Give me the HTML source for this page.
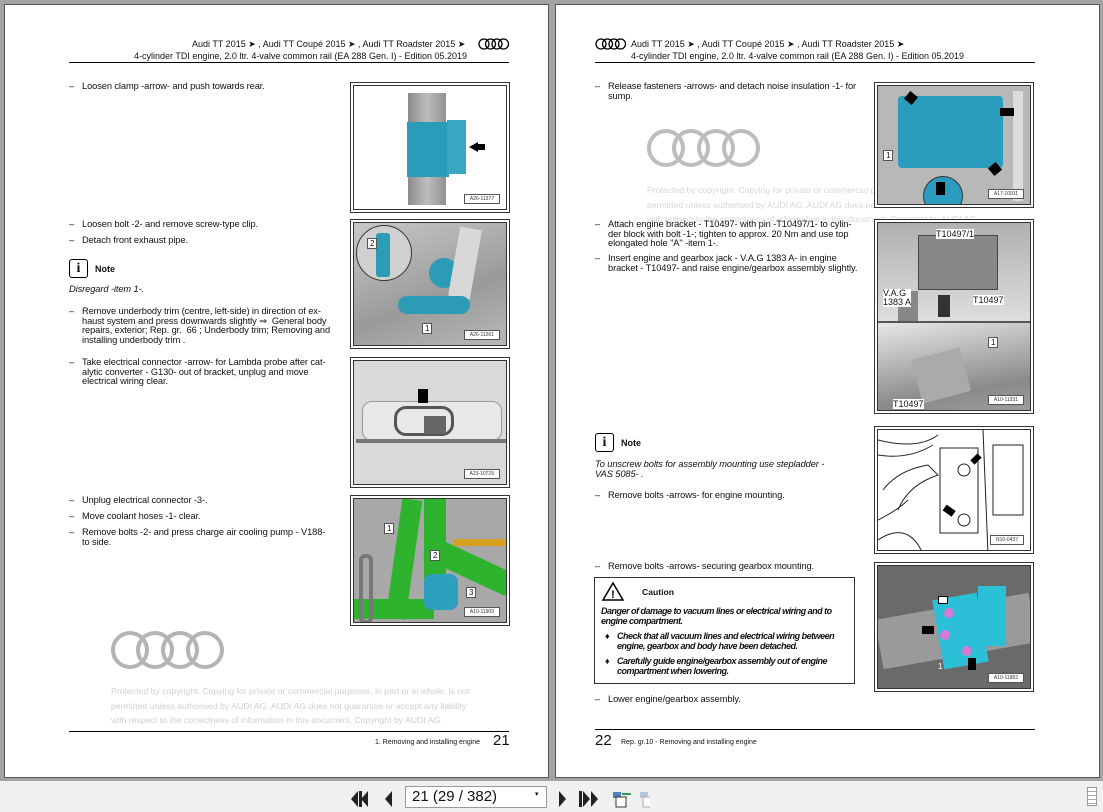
<!DOCTYPE html>
<html><head><meta charset="utf-8"><style>
*{margin:0;padding:0;box-sizing:border-box}
body{width:1103px;height:812px;background:#a3a3a3;position:relative;overflow:hidden;font-family:"Liberation Sans",Arial,sans-serif;color:#111}
.page{position:absolute;top:4px;height:774px;background:#fff;border:1px solid #555}
.a{position:absolute;white-space:nowrap}
.t{position:absolute;font-size:9.3px;line-height:9.6px;letter-spacing:-0.1px;white-space:nowrap}
.t .d{position:absolute;left:-13px}
.hl{position:absolute;height:1px;background:#000}
.fig{position:absolute;border:1px solid #333;padding:2px;background:#fff}
.fig>div{width:100%;height:100%;border:1px solid #333;position:relative;overflow:hidden}
.lab{position:absolute;right:6px;bottom:5px;font-size:5px;border:1px solid #555;background:#fff;padding:1px 5px;color:#333}
.wm{position:absolute;font-size:8.7px;color:#cfcfcf;line-height:14.5px;white-space:nowrap}
.rings{position:absolute}
.num{position:absolute;background:#fff;border:1px solid #555;font-size:8px;padding:0 2px}
.tb{position:absolute;left:0;top:781px;width:1103px;height:31px;background:#f0f0f0}
</style></head><body>

<!-- LEFT PAGE -->
<div class="page" style="left:4px;width:545px"></div>
<div class="a" style="left:192px;top:39px;font-size:9px">Audi TT 2015 ➤ , Audi TT Coupé 2015 ➤ , Audi TT Roadster 2015 ➤</div>
<svg class="rings" style="left:478px;top:38px" width="32" height="12"><g fill="none" stroke="#000" stroke-width="1.3"><circle cx="6" cy="6" r="5"/><circle cx="12.5" cy="6" r="5"/><circle cx="19" cy="6" r="5"/><circle cx="25.5" cy="6" r="5"/></g></svg>
<div class="a" style="left:134px;top:51px;font-size:9px">4-cylinder TDI engine, 2.0 ltr. 4-valve common rail (EA 288 Gen. I) - Edition 05.2019</div>
<div class="hl" style="left:69px;top:62px;width:440px"></div>

<div class="t" style="left:82px;top:82px"><span class="d">–</span>Loosen clamp -arrow- and push towards rear.</div>
<div class="t" style="left:82px;top:220px"><span class="d">–</span>Loosen bolt -2- and remove screw-type clip.</div>
<div class="t" style="left:82px;top:236px"><span class="d">–</span>Detach front exhaust pipe.</div>
<div class="a" style="left:69px;top:259px;width:19px;height:19px;border:1.3px solid #000;border-radius:3px;font:bold 14px 'Liberation Serif',serif;text-align:center;line-height:17px">i</div>
<div class="a" style="left:95px;top:264px;font-size:9px;font-weight:bold">Note</div>
<div class="t" style="left:69px;top:285px;font-style:italic">Disregard -item 1-.</div>
<div class="t" style="left:82px;top:307px"><span class="d">–</span>Remove underbody trim (centre, left-side) in direction of ex-<br>haust system and press downwards slightly ⇒&nbsp; General body<br>repairs, exterior; Rep. gr.&nbsp; 66 ; Underbody trim; Removing and<br>installing underbody trim .</div>
<div class="t" style="left:82px;top:358px"><span class="d">–</span>Take electrical connector -arrow- for Lambda probe after cat-<br>alytic converter - G130- out of bracket, unplug and move<br>electrical wiring clear.</div>
<div class="t" style="left:82px;top:496px"><span class="d">–</span>Unplug electrical connector -3-.</div>
<div class="t" style="left:82px;top:512px"><span class="d">–</span>Move coolant hoses -1- clear.</div>
<div class="t" style="left:82px;top:528px"><span class="d">–</span>Remove bolts -2- and press charge air cooling pump - V188-<br>to side.</div>

<!-- figs left -->
<div class="fig" style="left:350px;top:82px;width:160px;height:131px"><div style="background:#fff">
 <div class="a" style="left:54px;top:7px;width:38px;height:112px;background:linear-gradient(90deg,#8a8a8a,#bdbdbd 50%,#909090)"></div>
 <div class="a" style="left:53px;top:36px;width:42px;height:55px;background:#2a9bb8"></div>
 <div class="a" style="left:93px;top:34px;width:19px;height:54px;background:#39a7c2"></div>
 <div class="a" style="left:115px;top:56px;width:0;height:0;border-top:5px solid transparent;border-bottom:5px solid transparent;border-right:9px solid #000"></div>
 <div class="a" style="left:123px;top:58px;width:8px;height:6px;background:#000"></div>
 <div class="lab">A26-11377</div></div></div>
<div class="fig" style="left:350px;top:219px;width:160px;height:130px"><div style="background:linear-gradient(160deg,#c8c8c8,#9a9a9a 60%,#b8b8b8)">
 <div class="a" style="left:2px;top:2px;width:56px;height:56px;border-radius:50%;background:#d0d0d0;border:1px solid #333"></div>
 <div class="a" style="left:22px;top:10px;width:14px;height:44px;background:#2c9cb6;border-radius:3px"></div>
 <div class="a" style="left:75px;top:35px;width:30px;height:30px;border-radius:50%;background:#2c9cb6"></div>
 <div class="a" style="left:100px;top:5px;width:22px;height:70px;background:#d8d8d8;transform:rotate(10deg)"></div>
 <div class="a" style="left:44px;top:73px;width:72px;height:18px;background:#2c9cb6;border-radius:9px"></div>
 <div class="num" style="left:13px;top:15px">2</div><div class="num" style="left:68px;top:100px">1</div>
 <div class="lab">A26-11261</div></div></div>
<div class="fig" style="left:350px;top:357px;width:160px;height:131px"><div style="background:#d9d9d9">
 <div class="a" style="left:8px;top:40px;width:140px;height:40px;background:#e8e8e8;border:1px solid #999;border-radius:10px"></div>
 <div class="a" style="left:40px;top:45px;width:60px;height:30px;border:3px solid #555;border-radius:12px"></div>
 <div class="a" style="left:70px;top:55px;width:22px;height:18px;background:#666"></div>
 <div class="a" style="left:2px;top:78px;width:150px;height:4px;background:#777"></div>
 <div class="a" style="left:64px;top:28px;width:10px;height:14px;background:#000"></div>
 <div class="lab">A23-10729</div></div></div>
<div class="fig" style="left:350px;top:495px;width:160px;height:131px"><div style="background:#a8a8a8">
 <div class="a" style="left:40px;top:0;width:20px;height:120px;background:#2db32d;transform:rotate(8deg)"></div>
 <div class="a" style="left:70px;top:0;width:22px;height:80px;background:#2db32d"></div>
 <div class="a" style="left:70px;top:55px;width:90px;height:24px;background:#2db32d;transform:rotate(25deg)"></div>
 <div class="a" style="left:0;top:100px;width:80px;height:20px;background:#2db32d"></div>
 <div class="a" style="left:70px;top:75px;width:34px;height:36px;background:#2f9fc0;border-radius:8px"></div>
 <div class="a" style="left:100px;top:40px;width:55px;height:7px;background:#d8a020"></div>
 <div class="a" style="left:5px;top:55px;width:14px;height:70px;border:4px solid #777;border-radius:6px"></div>
 <div class="num" style="left:30px;top:24px">1</div><div class="num" style="left:76px;top:51px">2</div><div class="num" style="left:112px;top:88px">3</div>
 <div class="lab">A10-11909</div></div></div>

<svg class="rings" style="left:110px;top:630px" width="115" height="40"><g fill="none" stroke="#b4b4b4" stroke-width="4"><circle cx="20" cy="20" r="17"/><circle cx="45" cy="20" r="17"/><circle cx="70" cy="20" r="17"/><circle cx="95" cy="20" r="17"/></g></svg>
<div class="wm" style="left:111px;top:684px">Protected by copyright. Copying for private or commercial purposes, in part or in whole, is not<br>permitted unless authorised by AUDI AG. AUDI AG does not guarantee or accept any liability<br>with respect to the correctness of information in this document. Copyright by AUDI AG.</div>
<div class="hl" style="left:69px;top:731px;width:440px"></div>
<div class="a" style="left:375px;top:739px;font-size:7px">1. Removing and installing engine</div>
<div class="a" style="left:493px;top:732px;font-size:15px">21</div>

<!-- RIGHT PAGE -->
<div class="page" style="left:555px;width:545px"></div>
<svg class="rings" style="left:595px;top:38px" width="32" height="12"><g fill="none" stroke="#000" stroke-width="1.3"><circle cx="6" cy="6" r="5"/><circle cx="12.5" cy="6" r="5"/><circle cx="19" cy="6" r="5"/><circle cx="25.5" cy="6" r="5"/></g></svg>
<div class="a" style="left:631px;top:39px;font-size:9px">Audi TT 2015 ➤ , Audi TT Coupé 2015 ➤ , Audi TT Roadster 2015 ➤</div>
<div class="a" style="left:631px;top:51px;font-size:9px">4-cylinder TDI engine, 2.0 ltr. 4-valve common rail (EA 288 Gen. I) - Edition 05.2019</div>
<div class="hl" style="left:595px;top:62px;width:440px"></div>

<svg class="rings" style="left:646px;top:128px" width="115" height="40"><g fill="none" stroke="#bdbdbd" stroke-width="4"><circle cx="20" cy="20" r="17"/><circle cx="45" cy="20" r="17"/><circle cx="70" cy="20" r="17"/><circle cx="95" cy="20" r="17"/></g></svg>
<div class="wm" style="left:647px;top:183px;color:#d6d6d6">Protected by copyright. Copying for private or commercial p<br>permitted unless authorised by AUDI AG. AUDI AG does not<br>with respect to the correctness of information in this document. Copyright by AUDI AG.</div>

<div class="t" style="left:608px;top:82px"><span class="d">–</span>Release fasteners -arrows- and detach noise insulation -1- for<br>sump.</div>
<div class="t" style="left:608px;top:220px"><span class="d">–</span>Attach engine bracket - T10497- with pin -T10497/1- to cylin-<br>der block with bolt -1-; tighten to approx. 20 Nm and use top<br>elongated hole "A" -item 1-.</div>
<div class="t" style="left:608px;top:254px"><span class="d">–</span>Insert engine and gearbox jack - V.A.G 1383 A- in engine<br>bracket - T10497- and raise engine/gearbox assembly slightly.</div>
<div class="a" style="left:595px;top:433px;width:19px;height:19px;border:1.3px solid #000;border-radius:3px;font:bold 14px 'Liberation Serif',serif;text-align:center;line-height:17px">i</div>
<div class="a" style="left:621px;top:438px;font-size:9px;font-weight:bold">Note</div>
<div class="t" style="left:595px;top:460px;font-style:italic">To unscrew bolts for assembly mounting use stepladder -<br>VAS 5085- .</div>
<div class="t" style="left:608px;top:491px"><span class="d">–</span>Remove bolts -arrows- for engine mounting.</div>
<div class="t" style="left:608px;top:562px"><span class="d">–</span>Remove bolts -arrows- securing gearbox mounting.</div>
<div class="a" style="left:594px;top:577px;width:261px;height:107px;border:1px solid #333"></div>
<svg class="a" style="left:601px;top:581px" width="24" height="21"><path d="M12 2 L22 19 L2 19 Z" fill="none" stroke="#000" stroke-width="1.5"/><text x="12" y="17" font-size="11" font-weight="bold" text-anchor="middle" font-family="Liberation Sans">!</text></svg>
<div class="a" style="left:642px;top:587px;font-size:8.6px;font-weight:bold">Caution</div>
<div class="t" style="left:601px;top:607px;font-style:italic;font-weight:bold;letter-spacing:-0.5px;font-size:9px">Danger of damage to vacuum lines or electrical wiring and to<br>engine compartment.</div>
<div class="t" style="left:617px;top:632px;font-style:italic;font-weight:bold;letter-spacing:-0.5px;font-size:9px"><span class="d" style="left:-12px">♦</span>Check that all vacuum lines and electrical wiring between<br>engine, gearbox and body have been detached.</div>
<div class="t" style="left:617px;top:657px;font-style:italic;font-weight:bold;letter-spacing:-0.5px;font-size:9px"><span class="d" style="left:-12px">♦</span>Carefully guide engine/gearbox assembly out of engine<br>compartment when lowering.</div>
<div class="t" style="left:608px;top:695px"><span class="d">–</span>Lower engine/gearbox assembly.</div>

<!-- figs right -->
<div class="fig" style="left:874px;top:82px;width:160px;height:126px"><div style="background:#b8b8b8">
 <div class="a" style="left:20px;top:10px;width:105px;height:72px;background:#2a9dbf;border-radius:4px"></div>
 <div class="a" style="left:45px;top:90px;width:40px;height:40px;border-radius:50%;background:#2a9dbf;border:1px solid #333"></div>
 <div class="a" style="left:135px;top:5px;width:10px;height:110px;background:#dcdcdc"></div>
 <div class="num" style="left:5px;top:64px">1</div>
 <div class="a" style="left:28px;top:7px;width:10px;height:10px;background:#000;transform:rotate(40deg)"></div>
 <div class="a" style="left:122px;top:22px;width:14px;height:8px;background:#000"></div>
 <div class="a" style="left:112px;top:78px;width:10px;height:10px;background:#000;transform:rotate(-40deg)"></div>
 <div class="a" style="left:58px;top:96px;width:9px;height:13px;background:#000"></div>
 <div class="lab">A17-10911</div></div></div>
<div class="fig" style="left:874px;top:219px;width:160px;height:195px"><div style="background:#c8c8c8">
 <div class="a" style="left:0;top:0;width:156px;height:98px;background:linear-gradient(180deg,#b0b0b0,#dedede)"></div>
 <div class="a" style="left:40px;top:12px;width:80px;height:55px;background:#888;border:1px solid #444"></div>
 <div class="a" style="left:20px;top:68px;width:20px;height:30px;background:#888"></div>
 <div class="a" style="left:60px;top:72px;width:12px;height:22px;background:#333"></div>
 <div class="a" style="left:0;top:98px;width:156px;height:2px;background:#555"></div>
 <div class="a" style="left:0;top:100px;width:156px;height:92px;background:linear-gradient(170deg,#e8e8e8,#8a8a8a 70%,#a0a0a0)"></div>
 <div class="a" style="left:38px;top:130px;width:50px;height:45px;background:#aaa;transform:rotate(-15deg)"></div>
 <div class="a" style="left:58px;top:6px;font-size:9px;background:#fff">T10497/1</div>
 <div class="a" style="left:5px;top:66px;font-size:9px;line-height:9px;background:#fff">V.A.G<br>1383 A</div>
 <div class="a" style="left:95px;top:72px;font-size:9px;background:#fff">T10497</div>
 <div class="num" style="left:110px;top:114px">1</div>
 <div class="a" style="left:15px;top:176px;font-size:9px;background:#fff">T10497</div>
 <div class="lab">A10-11331</div></div></div>
<div class="fig" style="left:874px;top:426px;width:160px;height:128px"><div style="background:#fff">
 <svg width="156" height="124" style="position:absolute;left:0;top:0"><g fill="none" stroke="#222" stroke-width="1"><path d="M0 10 Q40 20 60 5"/><path d="M0 25 Q30 30 55 15"/><path d="M5 60 Q20 40 50 35 L60 45 Q30 55 20 80"/><path d="M0 90 Q20 80 30 70"/><rect x="62" y="18" width="38" height="85"/><circle cx="86" cy="40" r="6"/><circle cx="86" cy="90" r="6"/><rect x="115" y="15" width="30" height="70"/><path d="M105 0 L110 124"/><path d="M0 110 Q30 90 45 124"/></g><rect x="93" y="26" width="10" height="6" fill="#000" transform="rotate(-45 98 29)"/><rect x="66" y="77" width="11" height="7" fill="#000" transform="rotate(35 71 80)"/></svg>
 <div class="lab">N10-0437</div></div></div>
<div class="fig" style="left:874px;top:562px;width:160px;height:130px"><div style="background:#6a6a6a">
 <div class="a" style="left:0;top:40px;width:156px;height:50px;background:#9a9a9a;transform:rotate(-10deg)"></div>
 <div class="a" style="left:60px;top:30px;width:45px;height:70px;background:#2cc0d8;transform:rotate(-10deg)"></div>
 <div class="a" style="left:100px;top:20px;width:28px;height:60px;background:#2cc0d8"></div>
 <div class="a" style="left:66px;top:42px;width:10px;height:10px;border-radius:50%;background:#d67ad6"></div>
 <div class="a" style="left:62px;top:64px;width:10px;height:10px;border-radius:50%;background:#d67ad6"></div>
 <div class="a" style="left:84px;top:80px;width:10px;height:10px;border-radius:50%;background:#d67ad6"></div>
 <div class="a" style="left:44px;top:60px;width:12px;height:8px;background:#000"></div>
 <div class="a" style="left:90px;top:92px;width:8px;height:12px;background:#000"></div>
 <div class="a" style="left:60px;top:30px;width:10px;height:8px;background:#fff;border:1px solid #000"></div>
 <div class="a" style="left:60px;top:96px;font-size:8px;color:#fff">1</div>
 <div class="lab">A10-11882</div></div></div>

<div class="hl" style="left:595px;top:729px;width:440px"></div>
<div class="a" style="left:595px;top:732px;font-size:15px">22</div>
<div class="a" style="left:621px;top:739px;font-size:7px">Rep. gr.10 - Removing and installing engine</div>

<!-- toolbar -->
<div class="tb">
 <svg style="position:absolute;left:350px;top:9px" width="300" height="18">
  <g fill="#222">
   <path d="M8 1 L1 9 L8 17 Z"/><rect x="9" y="1" width="3" height="16"/><path d="M19 1 L12 9 L19 17 Z" transform="translate(-1 0)"/>
   <path d="M42 1 L35 9 L42 17 Z"/>
   <path d="M209 1 L216 9 L209 17 Z"/>
   <path d="M233 1 L240 9 L233 17 Z"/><rect x="229" y="1" width="3" height="16"/><path d="M241 1 L248 9 L241 17 Z"/>
  </g>
  <rect x="263" y="2" width="8" height="6" fill="#4d7fb8"/><rect x="266" y="7" width="10" height="10" fill="#fff" stroke="#333"/><path d="M272 4 L281 4" stroke="#2a9a5a" stroke-width="2"/>
  <rect x="290" y="2" width="8" height="6" fill="#b8c8dc"/><rect x="293" y="7" width="10" height="10" fill="#fff" stroke="#aaa"/>
 </svg>
 <div class="a" style="left:405px;top:5px;width:142px;height:22px;background:#fff;border:1px solid #999;font-size:15px;line-height:20px;padding-left:6px;font-family:'Liberation Sans Narrow','Liberation Sans',sans-serif">21 (29 / 382)</div>
 <div class="a" style="left:535px;top:9px;font-size:7px">▾</div>
 <div class="a" style="left:1087px;top:6px;width:10px;height:19px;border:1px solid #999;background:repeating-linear-gradient(180deg,#fff 0 3px,#aaa 3px 4px)"></div>
</div>
</body></html>
